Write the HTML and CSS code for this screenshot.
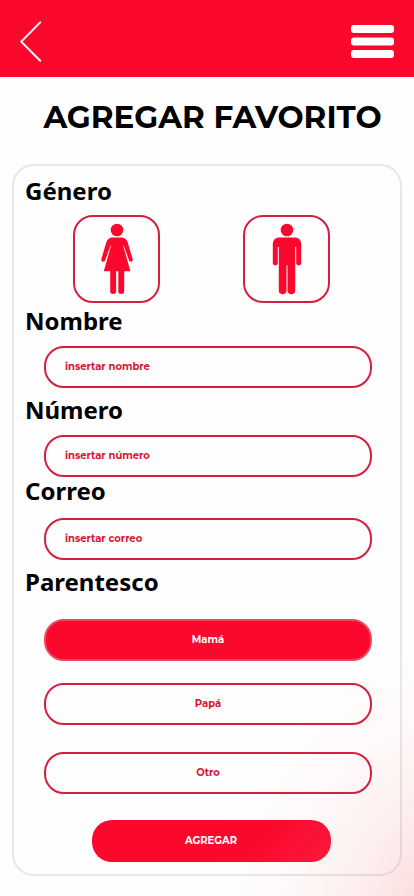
FILE: index.html
```html
<!DOCTYPE html>
<html lang="es">
<head>
<meta charset="utf-8">
<meta name="viewport" content="width=device-width, initial-scale=1">
<title>Agregar favorito</title>
<link rel="stylesheet" href="styles.css">
</head>
<body>
<header class="topbar">
  <button class="icon-button" type="button" aria-label="Volver">
    <svg width="22" height="42" viewBox="0 0 22 42" fill="none" stroke="#fff" stroke-width="2" stroke-linecap="round" stroke-linejoin="round"><path d="M20.2 1.4 1.2 20.6 20.2 39.8"/></svg>
  </button>
  <button class="icon-button" type="button" aria-label="Menú">
    <svg width="43" height="34" viewBox="0 0 43 34" fill="#fff"><rect width="43" height="8" y="0" rx="3"/><rect width="43" height="8" y="12.5" rx="3"/><rect width="43" height="8" y="25" rx="3"/></svg>
  </button>
</header>
<main>
  <h1 class="title">AGREGAR FAVORITO</h1>
  <form class="card">
    <h2 class="label">Género</h2>
    <div class="genders">
      <button class="gender" type="button" aria-label="Mujer">
        <svg width="32" height="72" viewBox="0 0 32 72" fill="#fa092c"><circle cx="16" cy="7" r="6.3"/><path d="M11.8 14.5h8.6c3.2 0 5.2 1.7 6.2 4.6l5 16.8c.8 2.8-2.6 4-3.6 1.4L22.8 22.7h-.6l7.2 25.500H23.200v20.600c0 3-5.900 3-5.900 0V48.200h-2.200v20.600c0 3-5.900 3-5.900 0V48.200H2.800l7.200-25.500h-.6L4.200 37.300C3.200 39.900-.4 38.700.4 35.900l5-16.800c1-2.900 3.200-4.600 6.400-4.600z"/></svg>
      </button>
      <button class="gender" type="button" aria-label="Hombre">
        <svg width="32" height="72" viewBox="0 0 32 72" fill="#fa092c"><circle cx="16" cy="7" r="6.3"/><path d="M8.600 14.500h14.800c4.300 0 6.800 2.600 6.800 6.800v18.600c0 3.300-5 3.300-5 0V24h-1v44c0 4.200-7.700 4.200-7.700 0V42.500h-1V68c0 4.200-7.700 4.200-7.700 0V24h-1v15.900c0 3.300-5 3.300-5 0V21.300c0-4.200 2.600-6.800 6.800-6.800z"/></svg>
      </button>
    </div>
    <label class="label" for="nombre">Nombre</label>
    <input class="pill field" id="nombre" type="text" placeholder="insertar nombre">
    <label class="label" for="numero">Número</label>
    <input class="pill field" id="numero" type="tel" placeholder="insertar número">
    <label class="label label-tight" for="correo">Correo</label>
    <input class="pill field" id="correo" type="email" placeholder="insertar correo">
    <h2 class="label">Parentesco</h2>
    <div class="options">
      <button class="pill option selected" type="button">Mamá</button>
      <button class="pill option" type="button">Papá</button>
      <button class="pill option option-last" type="button">Otro</button>
    </div>
    <button class="submit" type="submit">AGREGAR</button>
  </form>
</main>
</body>
</html>
```
FILE: styles.css
```css
* { box-sizing: border-box; }

body {
  margin: 0;
  min-height: 100vh;
  font-family: Montserrat, Inter, sans-serif;
  color: #000;
  background: radial-gradient(ellipse 270px 290px at 115% 103%, #fad0d0 0%, #fcdddd 22%, #fdeeee 45%, #fef9f9 72%, #fefefe 100%);
}

button, input { font: inherit; }
button { cursor: pointer; }

.topbar {
  display: flex;
  align-items: center;
  justify-content: space-between;
  height: 77px;
  padding: 6px 20px 0;
  background: #fa092c;
}

.icon-button {
  padding: 0;
  border: 0;
  background: none;
}

.icon-button svg, .gender svg { display: block; }

.title {
  margin: 0;
  padding: 20px 0 27px 11px;
  font-size: 31px;
  line-height: 40px;
  font-weight: 700;
  text-align: center;
  white-space: nowrap;
}

.card {
  display: flex;
  flex-direction: column;
  margin: 0 12px 20px;
  padding: 12px 28px 12px 30px;
  border: 2px solid rgba(120, 120, 120, 0.17);
  border-radius: 22px;
}

.label {
  margin: 9px 0 12px -19px;
  font-family: "Noto Sans", "Open Sans", sans-serif;
  font-size: 24px;
  line-height: 26px;
  font-weight: 700;
}

.label:first-child { margin-top: 0; margin-bottom: 11px; }
.label-tight { margin-top: 1px; margin-bottom: 14px; }

.genders {
  display: flex;
  justify-content: space-between;
  padding: 0 42px 0 29px;
  margin-bottom: -4px;
}

.gender {
  display: grid;
  place-items: center;
  width: 87px;
  height: 88px;
  padding: 0;
  border: 2px solid #d51f3e;
  border-radius: 20px;
  background: none;
}

.pill {
  width: 100%;
  height: 42px;
  padding: 0 19px 2px;
  border: 2px solid #d51f3e;
  border-radius: 20px;
  background: none;
  color: #dc1435;
  font-size: 10px;
  font-weight: 700;
}

.field::placeholder { color: #dc1435; opacity: 1; }

.options {
  display: flex;
  flex-direction: column;
  gap: 22px;
  padding-top: 12px;
}

.option-last { margin-top: 5px; }

.selected {
  border-color: #ee4660;
  background: #fa092c;
  color: #fff;
}

.submit {
  align-self: center;
  width: 239px;
  height: 42px;
  margin: 26px 0 0 6px;
  padding: 0 0 2px;
  border: 0;
  border-radius: 20px;
  background: linear-gradient(135deg, #fa092c 65%, #fb193c 100%);
  color: #fff;
  font-size: 10px;
  font-weight: 700;
}
```
